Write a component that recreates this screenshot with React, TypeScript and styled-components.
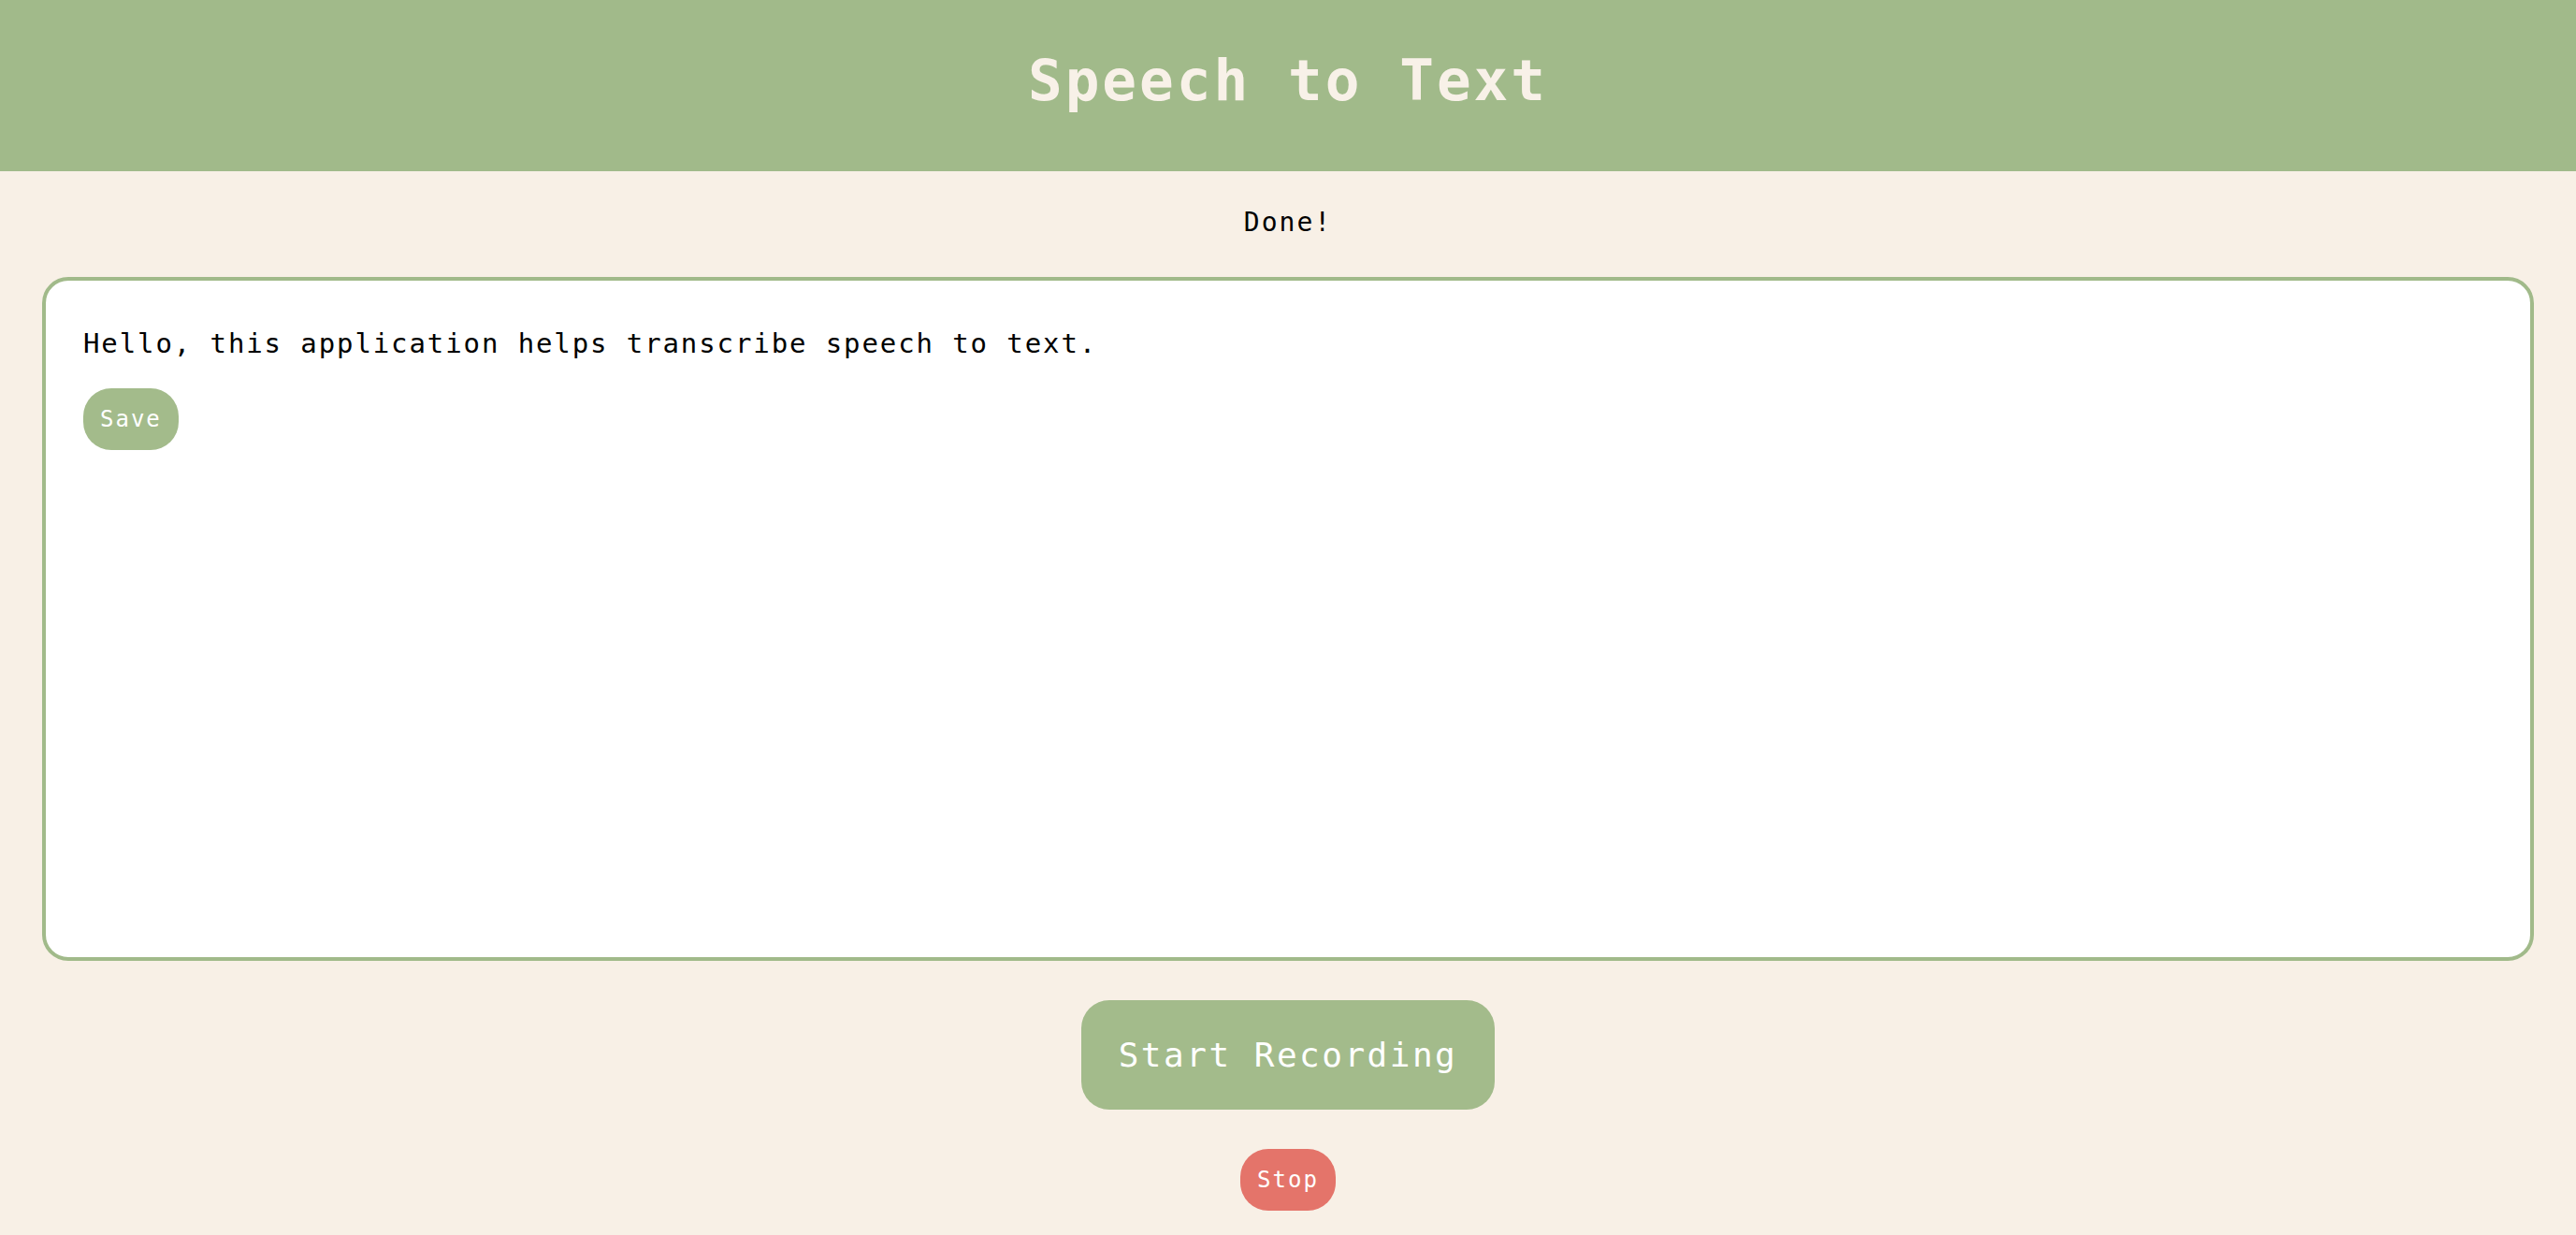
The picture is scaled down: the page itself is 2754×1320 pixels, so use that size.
import React, { useState } from 'react';
import styled, { createGlobalStyle } from 'styled-components';

const GlobalStyle = createGlobalStyle`
    body {
        margin: 0;
        background-color: #f8f0e6;
        font-family: 'DejaVu Sans Mono', 'Liberation Mono', monospace;
    }
`;

function App() {
    const [text] = useState('Hello, this application helps transcribe speech to text.');
    const [status] = useState('Done!');

    return <>
        <GlobalStyle />
        <Header>
            <Title>Speech to Text</Title>
        </Header>
        <Main>
            <Status>{status}</Status>
            <Transcript>
                <TranscriptText>{text}</TranscriptText>
                <PillButton color="#a3bb8b">Save</PillButton>
            </Transcript>
            <RecordButton>Start Recording</RecordButton>
            <PillButton color="#e4746a">Stop</PillButton>
        </Main>
    </>
};

export default App;

const Header = styled.header`
    background-color: #a1ba8a;
    height: 183px;
    box-sizing: border-box;
    padding-top: 50px;
    text-align: center;
`;

const Title = styled.h1`
    margin: 0;
    font-size: 61px;
    font-weight: 700;
    letter-spacing: 3px;
    line-height: normal;
    color: #f8f1e8;
`;

const Main = styled.main`
    display: flex;
    flex-direction: column;
    align-items: center;
    gap: 42px;
    padding: 38px 45px 40px;
`;

const Status = styled.p`
    margin: 0;
    font-size: 28px;
    letter-spacing: 2px;
    color: #000;
`;

const Transcript = styled.div`
    align-self: stretch;
    height: 731px;
    box-sizing: border-box;
    background-color: #fff;
    border: 4px solid #a1ba8a;
    border-radius: 28px;
    padding: 50px 40px 40px;
    display: flex;
    flex-direction: column;
    align-items: flex-start;
    gap: 31px;
`;

const TranscriptText = styled.p`
    margin: 0;
    font-size: 29px;
    letter-spacing: 1.9px;
    color: #000;
`;

const PillButton = styled.button<{ color: string }>`
    font-family: inherit;
    font-size: 24px;
    letter-spacing: 2px;
    line-height: normal;
    color: #fff;
    background-color: ${props => props.color};
    border: none;
    border-radius: 30px;
    padding: 19px 18px;
    cursor: pointer;
`;

const RecordButton = styled.button`
    font-family: inherit;
    font-size: 36px;
    letter-spacing: 2.5px;
    line-height: normal;
    color: #fff;
    background-color: #a3bb8b;
    border: none;
    border-radius: 30px;
    padding: 38px 40px;
    cursor: pointer;
`;
